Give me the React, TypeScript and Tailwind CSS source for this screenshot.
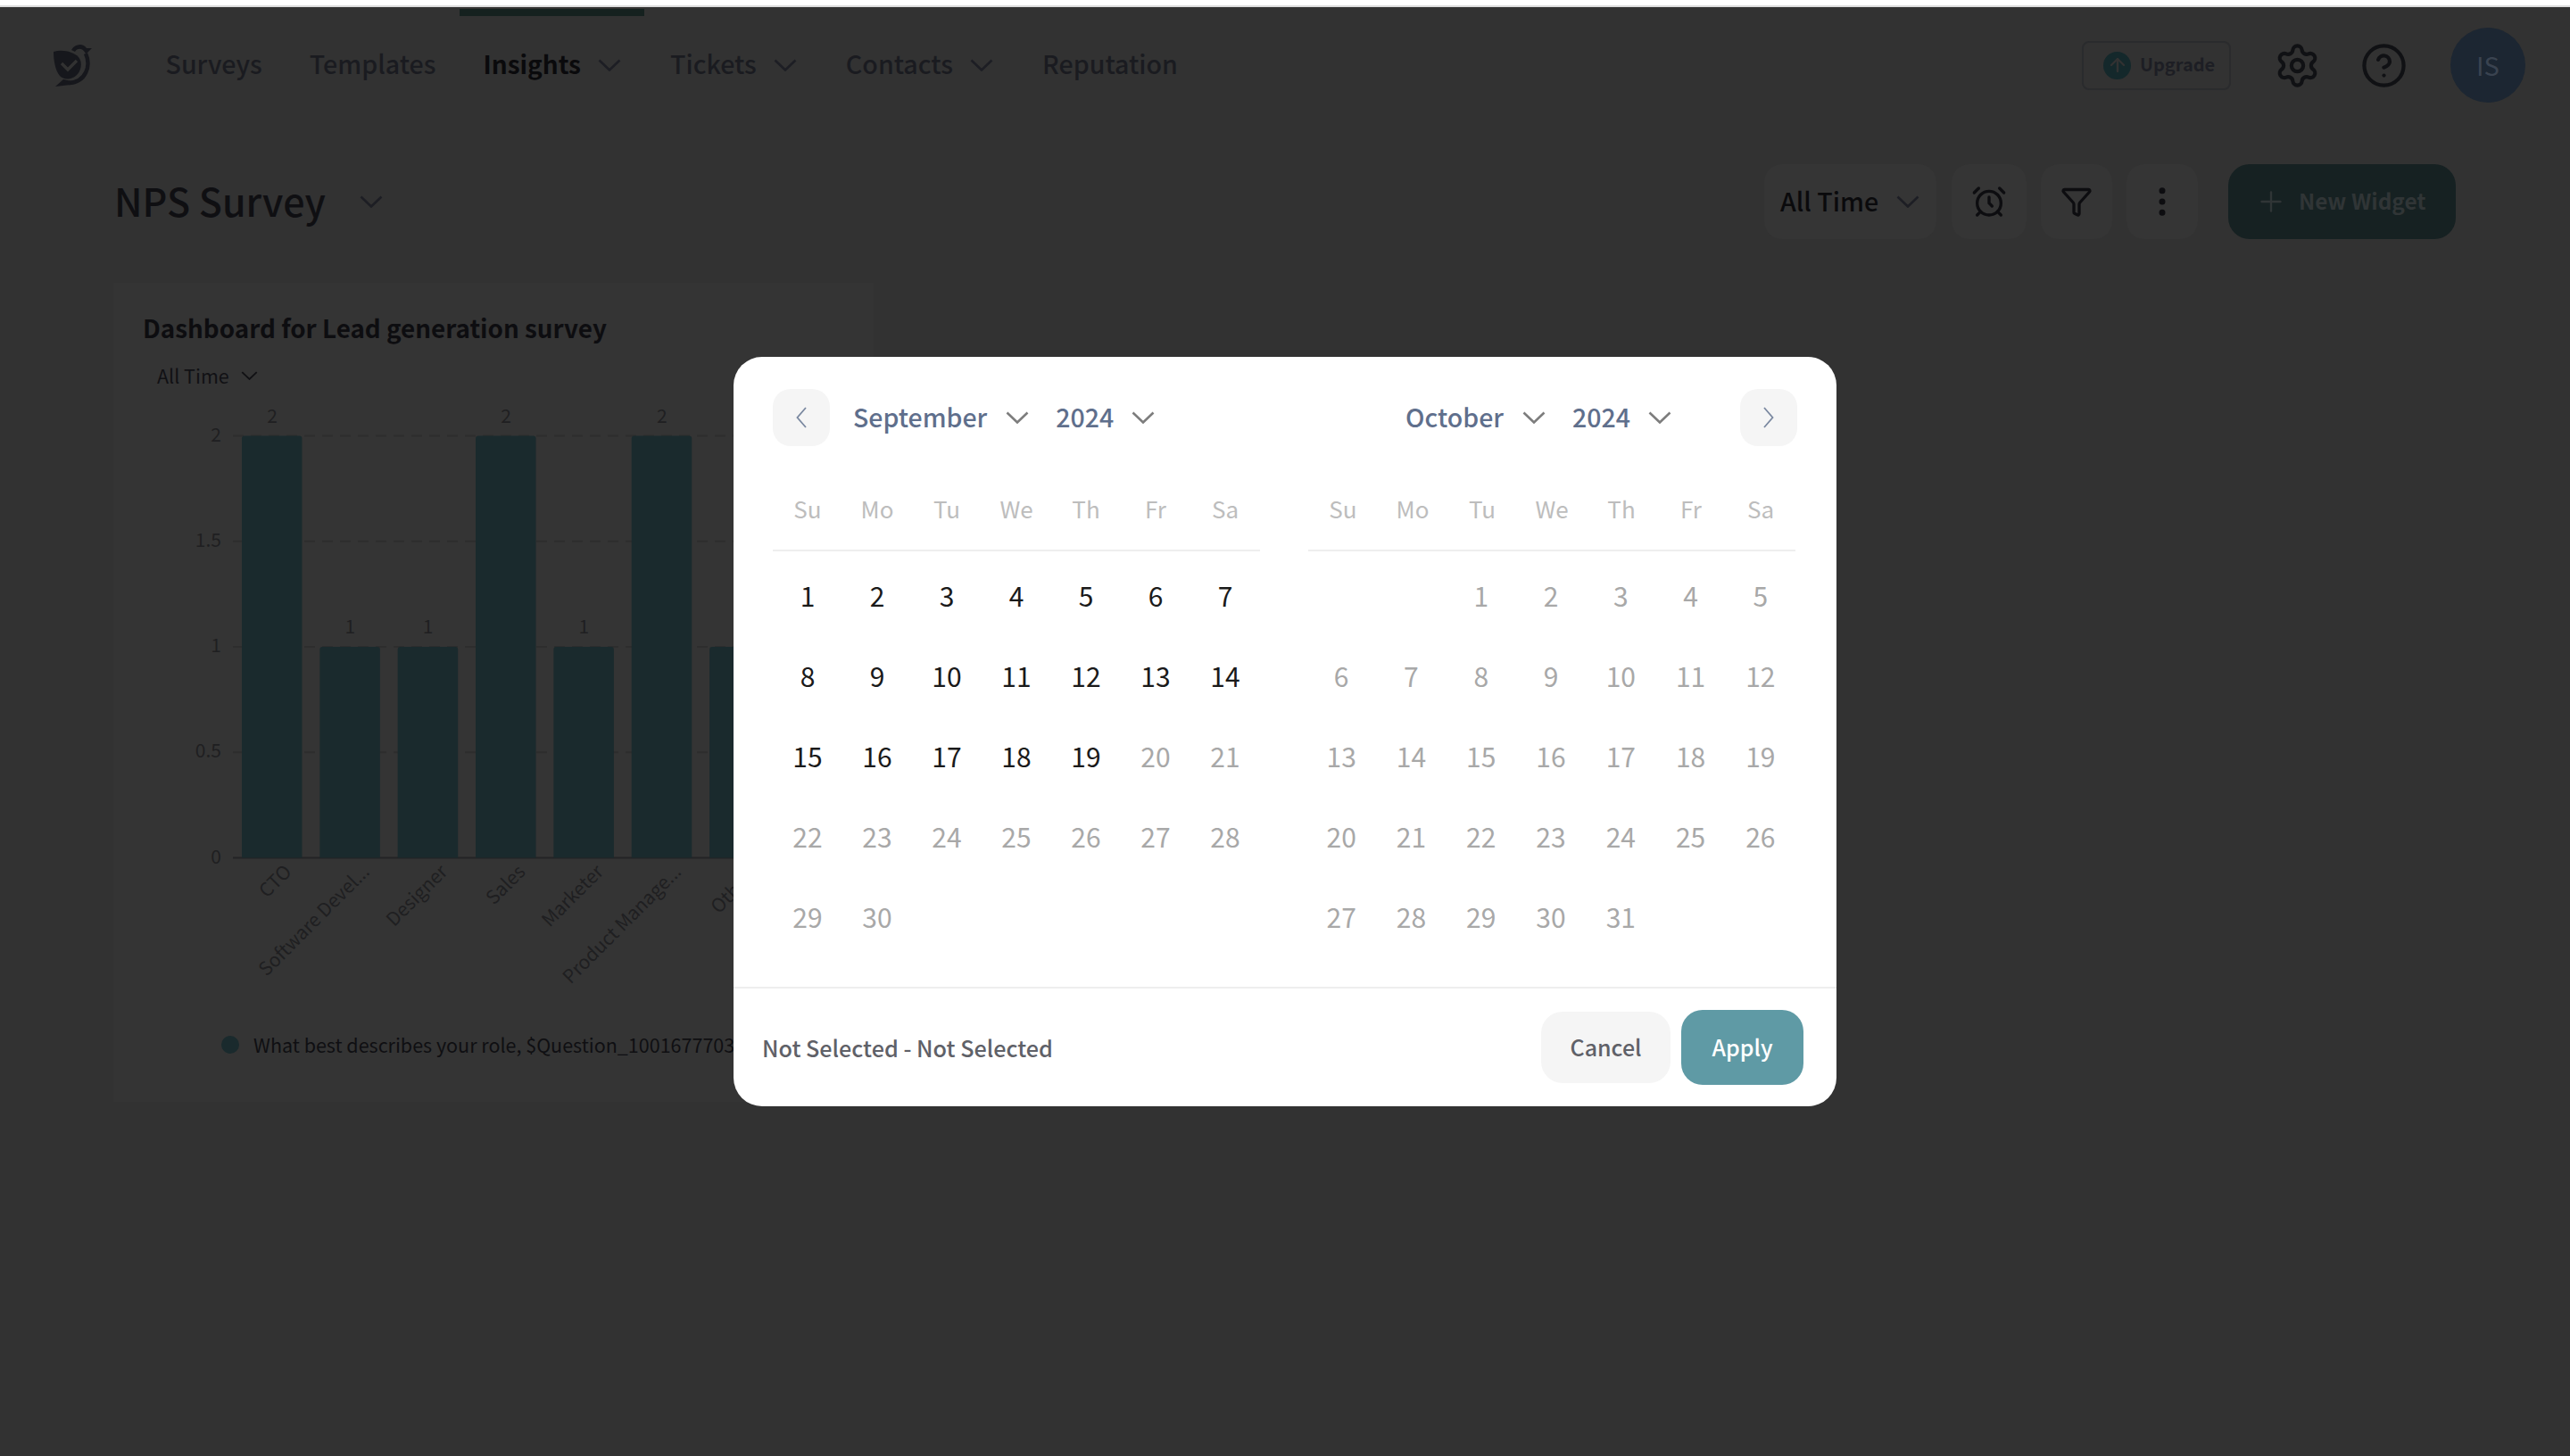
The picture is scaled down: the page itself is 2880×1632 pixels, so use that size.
import { AlarmClock, ArrowUp, CircleHelp, EllipsisVertical, Funnel, Plus, Settings } from 'lucide-react'

const NAV_ITEMS = [
  { label: 'Surveys' },
  { label: 'Templates' },
  { label: 'Insights', menu: true, active: true },
  { label: 'Tickets', menu: true, spaced: true },
  { label: 'Contacts', menu: true, spaced: true },
  { label: 'Reputation', spaced: true },
]

const WEEKDAYS = ['Su', 'Mo', 'Tu', 'We', 'Th', 'Fr', 'Sa']

const BARS = [
  { label: 'CTO', value: 2 },
  { label: 'Software Devel...', value: 1 },
  { label: 'Designer', value: 1 },
  { label: 'Sales', value: 2 },
  { label: 'Marketer', value: 1 },
  { label: 'Product Manage...', value: 2 },
  { label: 'Others', value: 1 },
]

function Chevron({ className = 'w-[26px] h-[14px]' }: { className?: string }) {
  return (
    <svg viewBox="0 0 26 14" fill="none" className={`shrink-0 ${className}`}>
      <path d="M1.5 1.5 13 12.5 24.5 1.5" stroke="currentColor" strokeWidth="2.6" />
    </svg>
  )
}

function Logo() {
  return (
    <svg viewBox="0 0 43 48" className="w-[43px] h-[48px] shrink-0" fill="#16171c">
      <path d="M0 9C10 6 22 9 28 15 33 21 31 31 25 36 19 41 11 40 7 36 2 30 0 19 0 9Z" />
      <path d="M9 22 16 29 26 19" fill="none" stroke="#323232" strokeWidth="3.4" />
      <path d="M20 7C24 0 33-1 37 5L43 5 38 10 36 11C33 5 27 4 24 9Z" />
      <path d="M36 11C42 24 37 43 17 44" fill="none" stroke="#16171c" strokeWidth="4.4" />
      <path d="M2 48 11 40 20 42 19 46Z" />
    </svg>
  )
}

function Header() {
  return (
    <header className="flex items-center h-[130px] pl-[60px] pr-[50px]">
      <Logo />
      <nav className="flex items-center h-full ml-[56px]">
        {NAV_ITEMS.map((item) => (
          <div
            key={item.label}
            className={`relative flex items-center gap-[19px] h-full px-[26.5px] ${item.spaced ? 'ml-[2px]' : ''}`}
          >
            {item.active && <div className="absolute top-[2px] left-0 right-0 h-[8px] bg-[#15211f]" />}
            <span
              className={`-mt-[4px] leading-[40px] ${
                item.active ? 'text-[28px] font-semibold text-[#0a0a0c]' : 'text-[28.6px] font-medium text-[#1a1b20]'
              }`}
            >
              {item.label}
            </span>
            {item.menu && <Chevron className="w-[26px] h-[14px] text-[#1d1e24]" />}
          </div>
        ))}
      </nav>
      <div className="flex items-center ml-auto">
        <div className="flex items-center gap-[10px] w-[167px] h-[55px] pl-[22px] rounded-[8px] border-2 border-[#2a2b2d]">
          <div className="flex items-center justify-center w-[31px] h-[31px] rounded-full bg-[#14282b]">
            <ArrowUp size={24} color="#323232" strokeWidth={2.4} />
          </div>
          <span className="-mt-[2px] text-[20px] leading-[30px] font-semibold text-[#1d1e24]">Upgrade</span>
        </div>
        <Settings size={53} strokeWidth={1.9} color="#101114" className="ml-[48px]" />
        <CircleHelp size={53} strokeWidth={1.9} color="#101114" className="ml-[44px]" />
        <div className="flex items-center justify-center w-[84px] h-[84px] ml-[48px] rounded-full bg-[#1c2632] text-[29px] text-[#3a4350]">
          IS
        </div>
      </div>
    </header>
  )
}

function Toolbar() {
  return (
    <div className="flex items-center h-[84px] mt-[46px] pl-[128px] pr-[128px]">
      <h1 className="-mt-[5px] text-[43px] leading-[60px] font-medium text-[#0f0f12]">NPS Survey</h1>
      <Chevron className="w-[26px] h-[14px] ml-[38px] text-[#1d1e24]" />
      <div className="flex items-center ml-auto h-full">
        <button className="flex items-center gap-[20px] w-[193px] h-full pl-[18px] rounded-[20px] bg-[#353535]">
          <span className="-mt-[2px] text-[28.6px] leading-[40px] font-medium text-[#0a0a0c]">All Time</span>
          <Chevron className="w-[26px] h-[14px] text-[#1d1e24]" />
        </button>
        <button className="flex items-center justify-center w-[84px] h-full ml-[17px] rounded-[20px] bg-[#353535]">
          <AlarmClock size={40} color="#0d0d10" />
        </button>
        <button className="flex items-center justify-center w-[80px] h-full ml-[16px] rounded-[20px] bg-[#353535]">
          <Funnel size={36} color="#0d0d10" strokeWidth={2.2} />
        </button>
        <button className="flex items-center justify-center w-[80px] h-full ml-[16px] rounded-[20px] bg-[#353535]">
          <EllipsisVertical size={42} color="#0d0d10" fill="#0d0d10" />
        </button>
        <button className="flex items-center gap-[13px] w-[255px] h-full ml-[34px] pl-[30px] rounded-[24px] bg-[#162122] text-[#303536]">
          <Plus size={36} strokeWidth={1.6} />
          <span className="-mt-[2px] text-[24.4px] leading-[36px] font-semibold">New Widget</span>
        </button>
      </div>
    </div>
  )
}

function BarChart() {
  const pitch = 87.35
  const base = 521.5
  const unit = 236.5
  const ticks = [2, 1.5, 1, 0.5, 0]
  return (
    <svg width="852" height="724" className="block mt-[4px]" fontSize="21">
      {ticks.map((tick) => {
        const y = base - tick * unit
        return (
          <g key={tick}>
            {tick > 0 && <line x1="134" x2="852" y1={y} y2={y} stroke="#2d2d2d" strokeWidth="2" strokeDasharray="12 8" />}
            <text x="121" y={y + 6} textAnchor="end" fill="#1f1f21">
              {tick}
            </text>
          </g>
        )
      })}
      <line x1="134" x2="852" y1={base} y2={base} stroke="#232325" strokeWidth="2" />
      {BARS.map((bar, i) => {
        const x = 144 + i * pitch
        const h = bar.value * unit
        const cx = x + 34
        return (
          <g key={bar.label}>
            <path d={`M${x} ${base}V${base - h + 3}q0-3 3-3h61.5q3 0 3 3V${base}Z`} fill="#1a2a2d" />
            <text x={cx} y={base - h - 15} textAnchor="middle" fill="#1f1f21">
              {bar.value}
            </text>
            <text
              x={cx + 23}
              y={base + 17}
              textAnchor="end"
              fontSize="21"
              fill="#1f1f21"
              transform={`rotate(-45 ${cx + 23} ${base + 17})`}
            >
              {bar.label}
            </text>
          </g>
        )
      })}
    </svg>
  )
}

function DashboardCard() {
  return (
    <section className="w-[852px] h-[918px] ml-[127px] mt-[49px] bg-[#343434] overflow-hidden">
      <h2 className="mt-[30px] ml-[33px] text-[27.8px] leading-[40px] font-semibold text-[#0d0d10]">
        Dashboard for Lead generation survey
      </h2>
      <div className="flex items-center gap-[13px] mt-[19px] ml-[49px] text-[#111114]">
        <span className="text-[21.5px] leading-[30px]">All Time</span>
        <Chevron className="w-[19px] h-[10px]" />
      </div>
      <BarChart />
      <div className="flex items-center gap-[16px] ml-[121px] -mt-[8px] whitespace-nowrap">
        <span className="w-[20px] h-[20px] rounded-full bg-[#1a2a2d]" />
        <span className="text-[21.5px] leading-[30px] text-[#0f0f12]">
          What best describes your role, $Question_1001677703
        </span>
      </div>
    </section>
  )
}

interface MonthProps {
  month: string
  offset: number
  days: number
  activeUntil: number
  side: 'left' | 'right'
}

function Month({ month, offset, days, activeUntil, side }: MonthProps) {
  return (
    <div className="w-[546px]">
      <div className="flex items-center h-[64px]">
        {side === 'left' ? (
          <button className="flex items-center justify-center w-[64px] h-[64px] mr-[26px] rounded-[20px] bg-[#f5f5f5]">
            <svg viewBox="0 0 12 24" fill="none" className="w-[12px] h-[24px]">
              <path d="M11 1 1.5 12 11 23" stroke="#7a88a0" strokeWidth="1.8" />
            </svg>
          </button>
        ) : (
          <div className="w-[109px]" />
        )}
        <span className="-mt-[3px] text-[28.5px] leading-[40px] font-medium text-[#5f6f8c]">{month}</span>
        <Chevron className="w-[26px] h-[14px] ml-[21px] text-[#7d7d7d]" />
        <span className="-mt-[3px] ml-[30px] text-[28.5px] leading-[40px] font-medium text-[#5f6f8c]">2024</span>
        <Chevron className="w-[26px] h-[14px] ml-[20px] text-[#7d7d7d]" />
        {side === 'right' && (
          <button className="flex items-center justify-center w-[64px] h-[64px] ml-auto -mr-[2px] rounded-[20px] bg-[#f5f5f5]">
            <svg viewBox="0 0 12 24" fill="none" className="w-[12px] h-[24px]">
              <path d="M1 1 10.5 12 1 23" stroke="#7a88a0" strokeWidth="1.8" />
            </svg>
          </button>
        )}
      </div>
      <div className="grid grid-cols-7 mt-[42px] pb-[18px] border-b-2 border-[#eeeeee]">
        {WEEKDAYS.map((day) => (
          <span key={day} className="h-[56px] text-center text-[26px] leading-[56px] text-[#bdbdbd]">
            {day}
          </span>
        ))}
      </div>
      <div className={`grid grid-cols-7 mt-[4px] ${side === 'right' ? '-ml-[2px]' : ''}`}>
        {Array.from({ length: offset }).map((_, i) => (
          <span key={i} className="h-[90px]" />
        ))}
        {Array.from({ length: days }).map((_, i) => (
          <span
            key={i}
            className={`h-[90px] text-center text-[30px] leading-[90px] ${
              i < activeUntil ? 'text-[#1a1a1a]' : 'text-[#a8a8a8]'
            }`}
          >
            {i + 1}
          </span>
        ))}
      </div>
    </div>
  )
}

function DatePickerModal() {
  return (
    <div className="absolute inset-x-0 top-[8px] bottom-0 flex items-center justify-center">
      <div className="w-[1236px] h-[840px] rounded-[32px] bg-white">
        <div className="flex gap-[54px] pt-[36px] pl-[44px]">
          <Month month="September" offset={0} days={30} activeUntil={19} side="left" />
          <Month month="October" offset={2} days={31} activeUntil={0} side="right" />
        </div>
        <div className="flex items-center h-[134px] mt-[34px] pl-[32px] pr-[37px] border-t-2 border-[#eeeeee]">
          <span className="-mt-[1px] text-[25.2px] leading-[36px] font-medium text-[#5f6168]">Not Selected - Not Selected</span>
          <button className="flex items-center justify-center w-[145px] h-[80px] ml-auto rounded-[24px] bg-[#f5f5f5] text-[25px] font-medium text-[#5f6168]">
            Cancel
          </button>
          <button className="flex items-center justify-center w-[137px] h-[84px] ml-[12px] rounded-[24px] bg-[#5f9aa5] text-[25px] font-medium text-white">
            Apply
          </button>
        </div>
      </div>
    </div>
  )
}

export default function App() {
  return (
    <div className="relative w-[2880px] h-[1632px] overflow-hidden bg-[#323232] font-['Noto_Sans_CJK_SC',sans-serif]">
      <div className="h-[6px] bg-white" />
      <div className="h-[2px] bg-[#dcdcdc]" />
      <Header />
      <Toolbar />
      <DashboardCard />
      <DatePickerModal />
    </div>
  )
}
